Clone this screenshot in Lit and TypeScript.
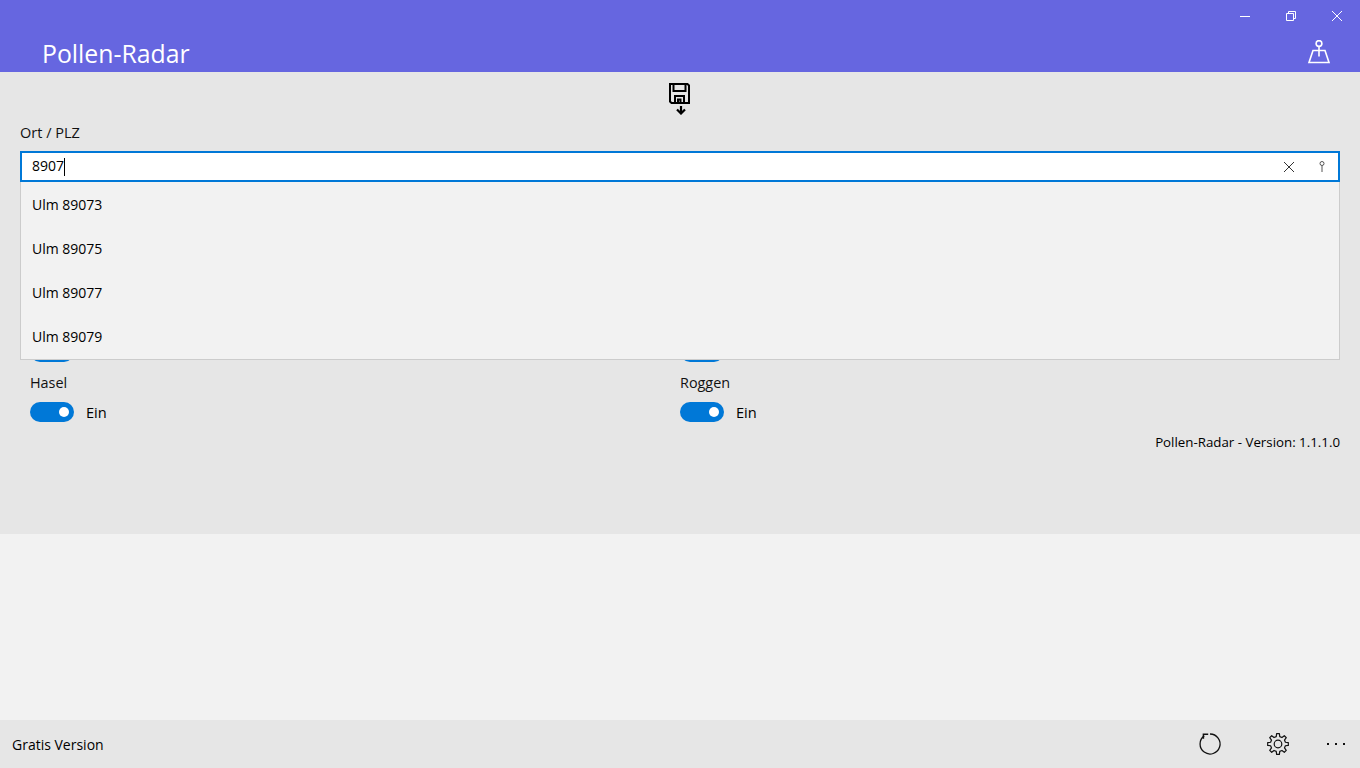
import { LitElement, html, css, nothing } from "lit";
import { customElement } from "lit/decorators.js";

// Only the last row's labels are visible; the rows above sit behind the open suggestion list.
const groups: (string | null)[] = [null, null, null, null, null, null, "Hasel", "Roggen"];

const suggestions = ["Ulm 89073", "Ulm 89075", "Ulm 89077", "Ulm 89079"];

function gearPath(teeth: number, cx: number, cy: number, rOut: number, rIn: number): string {
  const pts: string[] = [];
  const step = (Math.PI * 2) / teeth;
  for (let i = 0; i < teeth; i++) {
    const a = i * step - Math.PI / 2;
    const w = step * 0.17;
    const w2 = step * 0.3;
    const list: [number, number][] = [
      [rIn, a - w2],
      [rOut, a - w],
      [rOut, a + w],
      [rIn, a + w2],
    ];
    for (const [r, t] of list) {
      pts.push(`${(cx + r * Math.cos(t)).toFixed(2)} ${(cy + r * Math.sin(t)).toFixed(2)}`);
    }
  }
  return "M" + pts.join("L") + "Z";
}

@customElement("app-root")
export class AppRoot extends LitElement {
  static styles = css`
    :host {
      display: flex;
      flex-direction: column;
      height: 768px;
      width: 1360px;
      overflow: hidden;
      background: #f2f2f2;
      color: #000;
      font-family: "Open Sans", "Noto Sans", sans-serif;
      font-size: 14px;
    }
    .titlebar {
      height: 72px;
      background: #6666e0;
      color: #fff;
      position: relative;
      display: flex;
      align-items: flex-end;
      justify-content: space-between;
      flex: none;
    }
    .title {
      font-size: 24.8px;
      line-height: 32px;
      margin: 0 0 3px 42px;
    }
    .winctl {
      position: absolute;
      top: 0;
      right: 0;
      display: flex;
    }
    .winctl div {
      width: 46px;
      height: 32px;
      display: flex;
      align-items: center;
      justify-content: center;
    }
    .pin {
      margin: 0 29px 6px 0;
      display: block;
    }
    .panel {
      height: 462px;
      background: #e6e6e6;
      flex: none;
      padding: 0 20px;
      box-sizing: border-box;
      position: relative;
    }
    .save {
      height: 44px;
      padding-top: 9px;
      box-sizing: border-box;
      display: flex;
      justify-content: center;
    }
    .label {
      height: 35px;
      line-height: 33px;
      color: #111;
      font-size: 14.5px;
    }
    .search {
      height: 31px;
      border: 2px solid #0078d7;
      background: #fff;
      box-sizing: border-box;
      display: flex;
      align-items: center;
      padding: 0 13px 0 10px;
    }
    .value {
      flex: 1;
      display: flex;
      align-items: center;
      height: 100%;
      padding-bottom: 3px;
      box-sizing: border-box;
    }
    .caret {
      width: 1px;
      height: 18px;
      background: #000;
      margin-top: 3px;
    }
    .search svg {
      display: block;
    }
    .clear {
      margin-right: 25px;
    }
    .dropdown {
      position: absolute;
      left: 20px;
      right: 20px;
      top: 110px;
      height: 178px;
      box-sizing: border-box;
      background: #f2f2f2;
      border: 1px solid #cccccc;
      border-top: none;
      z-index: 2;
    }
    .dropdown div {
      height: 44px;
      line-height: 46px;
      padding-left: 11px;
    }
    .grid {
      display: grid;
      grid-template-columns: 650px 650px;
      padding: 10px 0 0 10px;
    }
    .group {
      height: 60px;
    }
    .name {
      height: 20px;
      line-height: 21px;
      color: #111;
      font-size: 14.4px;
    }
    .toggle {
      display: flex;
      align-items: center;
      gap: 12px;
      height: 20px;
      margin-top: 10px;
    }
    .state {
      font-size: 14.6px;
    }
    .track {
      width: 44px;
      height: 20px;
      border-radius: 10px;
      background: #0078d7;
      position: relative;
    }
    .knob {
      position: absolute;
      width: 10px;
      height: 10px;
      border-radius: 50%;
      background: #fff;
      right: 5px;
      top: 5px;
    }
    .version {
      text-align: right;
      line-height: 20px;
      font-size: 13.3px;
    }
    .spacer {
      flex: 1;
    }
    .footer {
      height: 48px;
      background: #e6e6e6;
      flex: none;
      display: flex;
      align-items: center;
      padding-left: 12px;
    }
    .fbtn {
      width: 68px;
      height: 48px;
      display: flex;
      align-items: center;
      justify-content: center;
    }
    .fbtn.more {
      width: 48px;
    }
  `;

  render() {
    return html`
      <div class="titlebar">
        <div class="title">Pollen-Radar</div>
        <svg class="pin" width="24" height="26" viewBox="0 0 24 26" fill="none" stroke="#fff" stroke-width="1.6">
          <circle cx="12" cy="3.5" r="2.9"></circle>
          <path d="M12 6.5V16.5M6 10.5H18L22 22.5H2L6 10.5Z"></path>
        </svg>
        <div class="winctl">
          <div>
            <svg width="10" height="10" viewBox="0 0 10 10" fill="none" stroke="#fff"><path d="M0 5.5H10"></path></svg>
          </div>
          <div>
            <svg width="10" height="10" viewBox="0 0 10 10" fill="none" stroke="#fff"><path d="M0.5 2.5H7.5V9.5H0.5ZM2.5 2.5V0.5H9.5V7.5H7.5"></path></svg>
          </div>
          <div>
            <svg width="10" height="10" viewBox="0 0 10 10" fill="none" stroke="#fff"><path d="M0 0L10 10M10 0L0 10"></path></svg>
          </div>
        </div>
      </div>
      <div class="panel">
        <div class="save">
          <svg width="24" height="34" viewBox="0 0 24 34" fill="none" stroke="#000">
            <path stroke-width="2" d="M2 3H19.5L21 4.5V22H3.5L2 20.5Z"></path>
            <path stroke-width="2" d="M5.5 3V10H17.5V3M7 22V15H16V22"></path>
            <path stroke-width="2" d="M10 18.5H12.5V22H10Z"></path>
            <path stroke-width="2.2" d="M13 25V32.5M9 28.5L13 32.5L17 28.5"></path>
          </svg>
        </div>
        <div class="label">Ort / PLZ</div>
        <div class="search">
          <div class="value">8907<span class="caret"></span></div>
          <svg class="clear" width="10" height="10" viewBox="0 0 10 10" fill="none" stroke="#333"><path d="M0 0L10 10M10 0L0 10"></path></svg>
          <svg width="6" height="11" viewBox="0 0 6 11" fill="none" stroke="#555"><circle cx="3" cy="2.5" r="2"></circle><path d="M3 4.5V11"></path></svg>
        </div>
        <div class="dropdown">
          ${suggestions.map((s) => html`<div>${s}</div>`)}
        </div>
        <div class="grid">
          ${groups.map(
            (n) => html`
              <div class="group">
                <div class="name">${n ?? nothing}</div>
                <div class="toggle">
                  <div class="track"><div class="knob"></div></div>
                  ${n ? html`<span class="state">Ein</span>` : nothing}
                </div>
              </div>
            `
          )}
        </div>
        <div class="version">Pollen-Radar - Version: 1.1.1.0</div>
      </div>
      <div class="spacer"></div>
      <div class="footer">
        <span>Gratis Version</span>
        <div class="spacer"></div>
        <div class="fbtn">
          <svg width="24" height="24" viewBox="0 0 24 24" fill="none" stroke="#111" stroke-width="1.3">
            <path d="M6.2 3.9A10 10 0 1 0 12 2"></path>
            <path d="M5.4 6.8V2.2H10.2" stroke-width="1.5"></path>
          </svg>
        </div>
        <div class="fbtn">
          <svg width="24" height="24" viewBox="0 0 24 24" fill="none" stroke="#111" stroke-width="1.2">
            <circle cx="12" cy="12" r="3.8"></circle>
            <path d=${gearPath(8, 12, 12, 10.4, 7.6)} stroke-linejoin="round"></path>
          </svg>
        </div>
        <div class="fbtn more">
          <svg width="20" height="4" viewBox="0 0 20 4" fill="#111">
            <rect x="1" y="1" width="2" height="2"></rect>
            <rect x="9" y="1" width="2" height="2"></rect>
            <rect x="17" y="1" width="2" height="2"></rect>
          </svg>
        </div>
      </div>
    `;
  }
}
